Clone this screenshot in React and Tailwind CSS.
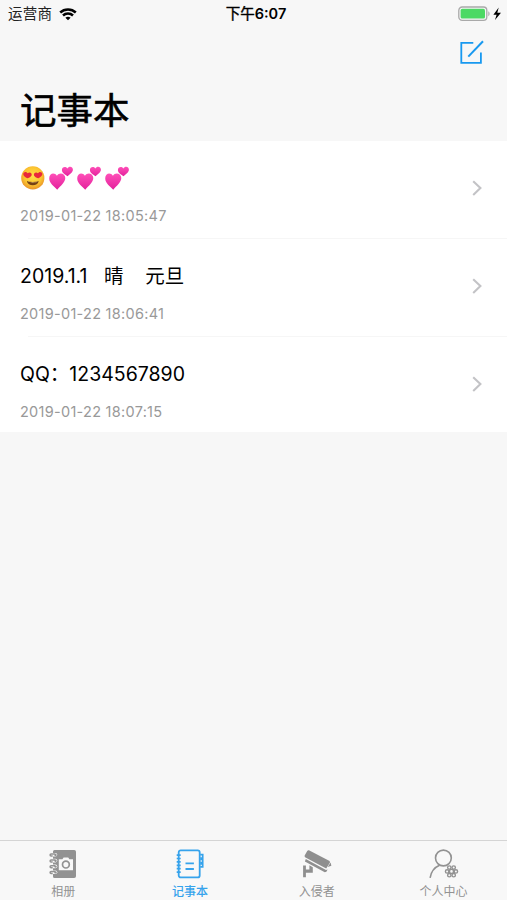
import React from 'react';

const WifiIcon = () => (
  <svg width="18" height="13" viewBox="0 0 18 13" fill="none" stroke="#000" strokeWidth="2.5">
    <path d="M1.2 4.5C5.5.4 12.5.4 16.8 4.5" />
    <path d="M4 7.5c2.8-2.7 7.2-2.7 10 0" />
    <path d="M9 12.3 6.4 9.7c1.4-1.4 3.8-1.4 5.2 0z" fill="#000" stroke="none" />
  </svg>
);

const BatteryIcon = () => (
  <svg width="44" height="16" viewBox="0 0 44 16" fill="none">
    <rect x="0.8" y="1" width="28" height="13.4" rx="3.4" stroke="#a9a9a9" strokeWidth="1.3" />
    <rect x="2.6" y="2.8" width="24.4" height="9.8" rx="1.6" fill="#4cd964" />
    <path d="M30.3 5.2c1.7.7 1.7 4.3 0 5z" fill="#a9a9a9" />
    <path d="M40.7 1.6 35.4 8.8h3.2l-1.6 5.3 6-7.4h-3.7z" fill="#000" />
  </svg>
);

const ComposeIcon = () => (
  <svg width="26" height="26" viewBox="0 0 26 26" fill="none" stroke="#1899f0" strokeWidth="1.8">
    <path d="M14.3 3.9H2.3v20h19.6V13.4" />
    <path d="M9.3 17.6 24 2.2" strokeWidth="2" />
  </svg>
);

const HeartEyes = () => (
  <svg width="28" height="26" viewBox="0 0 28 26">
    <defs>
      <radialGradient id="face" cx="50%" cy="42%" r="58%">
        <stop offset="0" stopColor="#ffe04a" />
        <stop offset="0.65" stopColor="#fcc430" />
        <stop offset="1" stopColor="#e8922a" />
      </radialGradient>
    </defs>
    <circle cx="12.8" cy="12.9" r="11.6" fill="url(#face)" />
    <path d="M7.2 13.2C3.5 11.7 2.4 8.9 4 7.5c1.4-1.1 3-.4 3.6.8 1-1.1 2.9-1.2 3.8.1 1.1 1.9-.9 4-4.2 4.8z" fill="#e9283c" />
    <path d="M18.4 13.2c3.7-1.5 4.8-4.3 3.2-5.7-1.4-1.1-3-.4-3.6.8-1-1.1-2.9-1.2-3.8.1-1.1 1.9.9 4 4.2 4.8z" fill="#e9283c" />
    <path d="M6.9 16c3.8 1.2 8 1.2 11.8 0-.5 2.9-2.9 4.3-5.9 4.3S7.4 18.9 6.9 16z" fill="#754014" />
    <path d="M7.9 16.5c3.3.8 6.5.8 9.8 0-.8 1.2-9 1.2-9.8 0z" fill="#f3d98c" />
  </svg>
);

const TwoHearts = () => (
  <svg width="28" height="26" viewBox="0 0 28 26">
    <defs>
      <linearGradient id="pink" x1="0" y1="0" x2="0" y2="1">
        <stop offset="0" stopColor="#ff4fb8" />
        <stop offset="1" stopColor="#e3219c" />
      </linearGradient>
    </defs>
    <path d="M9.2 24.7C6.3 21.3 1.2 18.5 1.2 13.2c0-5 5.4-6.2 7.7-2.5 2.5-3.8 8.4-2.3 8.4 2.4 0 4.3-4.7 7.8-8.1 11.6z" fill="url(#pink)" />
    <path d="M19.6 11.3c-2.1-1.7-5.5-3.3-5.7-6.1-.1-3.3 3.7-4.3 5.4-1.8 1.6-2.6 5.6-2.1 5.6 1.3 0 2.7-3.3 4.5-5.3 6.6z" fill="url(#pink)" />
  </svg>
);

const Chevron = () => (
  <svg className="mb-[3px]" width="12" height="18" viewBox="0 0 12 18" fill="none" stroke="#c3c3c6" strokeWidth="2.1">
    <path d="m2.2 2.2 7.2 6.9-7.2 6.9" />
  </svg>
);

const AlbumIcon = () => (
  <svg width="30" height="30" viewBox="0 0 30 30" fill="none">
    <path d="M6 1h20.2A1.8 1.8 0 0 1 28 2.8v24.4a1.8 1.8 0 0 1-1.8 1.8H6.5A1.5 1.5 0 0 1 5 27.500v-25A1.5 1.5 0 0 1 6.500 1z" fill="#929292" />
    {[4, 9.8, 15.6, 21.4].map((y) => (
      <g key={y}>
        <rect x="1.3" y={y} width="8" height="3.6" rx="1.8" fill="#f8f8f8" />
        <path d={`M7.3 ${y + 1.1}H3.1a1 1 0 0 0 0 2h1.6`} stroke="#929292" strokeWidth="1.5" />
        <circle cx="7.5" cy={y + 2} r="1.2" fill="#929292" />
      </g>
    ))}
    <path d="M10.8 10.3h3.6l1.2-1.9h4.6l1.2 1.9h3.6v11H10.800z" fill="#f8f8f8" />
    <circle cx="17.9" cy="15.6" r="3.4" stroke="#929292" strokeWidth="1.7" />
  </svg>
);

const NotebookIcon = () => (
  <svg width="30" height="30" viewBox="0 0 30 30" fill="none" stroke="#36a3ec" strokeWidth="1.8">
    <rect x="3.7" y="1.4" width="21" height="27" rx="2" />
    <path d="M1.7 6.1h4M1.7 9.5h4M1.7 12.9h4M1.7 16.3h4M1.7 19.7h4M1.7 23.1h4" strokeWidth="1.7" />
    <path d="M10.5 14.3h8.4M10.5 20h8.4" />
    <path d="M25.2 5.6h2.5v3.6h-2.5M25.2 10.4h2.5v3.3h-2.5M25.2 14.9h2.5v3h-2.5" strokeWidth="1.7" />
  </svg>
);

const CameraIcon = () => (
  <svg width="30" height="30" viewBox="0 0 30 30" fill="#8f8f8f">
    <path d="M7.4 1.4 27.6 12l.4 1.4-3.8 6.2L3.5 8.4c-.9-.5-1.1-1.3-.7-2.1l2.4-4.2c.5-.9 1.3-1.1 2.2-.7z" />
    <path d="m3.8 10 20.2 11 1.6-.5-1.2 2.3-1.6.5L2.9 12.4z" />
    <path d="m25.7 18.1 2.9-4.700.8 3.4z" />
    <path d="M1.1 16.4h2.8v4.1h3.5v-4.2l3.4 1.9v5.5H3.9v4.6H1.1z" />
  </svg>
);

const ProfileIcon = () => (
  <svg width="30" height="30" viewBox="0 0 30 30" fill="none" stroke="#929292">
    <circle cx="14.4" cy="9" r="7.9" strokeWidth="1.6" />
    <path d="M10.5 16.2C5.4 18.3 2.200 22.3 1.1 28.8" strokeWidth="1.6" />
    <g strokeWidth="1.4">
      <circle cx="22.5" cy="22.4" r="2" />
      <circle cx="18.1" cy="22.4" r="1.7" />
      <circle cx="20.3" cy="18.6" r="1.7" />
      <circle cx="24.7" cy="18.6" r="1.7" />
      <circle cx="26.9" cy="22.4" r="1.7" />
      <circle cx="24.7" cy="26.2" r="1.7" />
      <circle cx="20.3" cy="26.2" r="1.7" />
    </g>
  </svg>
);

const notes = [
  { id: 1, title: null, time: '2019-01-22 18:05:47' },
  { id: 2, title: '2019.1.1   晴    元旦', time: '2019-01-22 18:06:41' },
  { id: 3, title: 'QQ：1234567890', time: '2019-01-22 18:07:15' },
];

const tabs = [
  { name: '相册', Icon: AlbumIcon },
  { name: '记事本', Icon: NotebookIcon, active: true },
  { name: '入侵者', Icon: CameraIcon },
  { name: '个人中心', Icon: ProfileIcon },
];

const App = () => {
  return (
    <div className="w-full h-screen flex flex-col overflow-hidden bg-[#f7f7f7] text-black font-['Inter','Noto_Sans_CJK_SC',sans-serif]">

      {/* Status bar */}
      <div className="grid grid-cols-3 items-center h-7 shrink-0 pl-2 pr-[5px] text-[14.5px] leading-7">
        <div className="flex items-center gap-[7px] text-[#222]">
          <span className="tracking-[0.2px]">运营商</span> <WifiIcon />
        </div>
        <div className="text-center font-semibold pl-[2px]">
          <span className="font-normal [-webkit-text-stroke:0.4px_#000]">下午</span>6:07
        </div>
        <div className="flex justify-end">
          <BatteryIcon />
        </div>
      </div>

      {/* Large title header */}
      <div className="h-[113px] shrink-0 flex flex-col">
        <div className="flex justify-end pr-[22px] pt-[11px]">
          <ComposeIcon />
        </div>
        <h1 className="pl-5 pt-5 text-[36.5px] leading-[52px] font-normal [-webkit-text-stroke:0.6px_#000]">记事本</h1>
      </div>

      {/* Notes */}
      <div className="bg-white shrink-0">
        {notes.map((note) => (
          <div key={note.id} className="h-[98px] last:h-[95px]">
            <div className="flex items-center justify-between h-[97px] pl-5 pr-6">
              <div className="pt-[11px]">
                {note.title ? (
                  <p className="h-7 text-[19.5px] leading-7 whitespace-pre">{note.title}</p>
                ) : (
                  <div className="h-7 flex items-center" role="img" aria-label="😍💕💕💕">
                    <HeartEyes />
                    <TwoHearts />
                    <TwoHearts />
                    <TwoHearts />
                  </div>
                )}
                <p className="mt-[14px] text-[14.5px] leading-5 tracking-[0.28px] text-[#999]">{note.time}</p>
              </div>
              <Chevron />
            </div>
            {note.id !== notes.length && <div className="ml-7 h-px bg-[#f6f6f6]"></div>}
          </div>
        ))}
      </div>

      {/* Tab bar */}
      <div className="mt-auto h-[60px] shrink-0 grid grid-cols-4 border-t border-[#d5d5d5] bg-[#f8f8f8]">
        {tabs.map(({ name, Icon, active }) => (
          <div key={name} className={`flex flex-col items-center pt-2 text-xs leading-4 ${active ? 'text-[#36a3ec] font-medium' : 'text-[#929292]'}`}>
            <Icon />
            <span className="mt-[5px]">{name}</span>
          </div>
        ))}
      </div>
    </div>
  );
};

export default App;
